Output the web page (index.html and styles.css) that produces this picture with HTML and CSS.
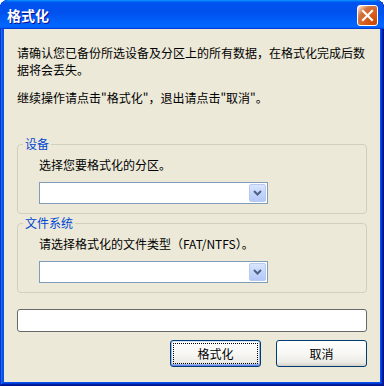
FILE: index.html
```html
<!DOCTYPE html>
<html lang="zh-CN">
<head>
<meta charset="utf-8">
<title>格式化</title>
<link rel="stylesheet" href="styles.css">
</head>
<body>
<div class="window">
  <div class="titlebar">
    <span class="title">格式化</span>
    <span class="close" aria-label="关闭">
      <svg width="13" height="13" viewBox="0 0 13 13"><path d="M2 2 L11 11 M11 2 L2 11" stroke="#fff" stroke-width="2.2" stroke-linecap="square"/></svg>
    </span>
  </div>
  <div class="client">
    <p class="msg">请确认您已备份所选设备及分区上的所有数据，在格式化完成后数据将会丢失。</p>
    <p class="msg msg2">继续操作请点击"格式化"，退出请点击"取消"。</p>
    <fieldset class="group">
      <legend>设备</legend>
      <div class="hint">选择您要格式化的分区。</div>
      <div class="combo">
        <span class="combo-arrow"><svg width="9" height="6" viewBox="0 0 9 6"><path d="M1 1 L4.5 4.5 L8 1" fill="none" stroke="#4d6185" stroke-width="2"/></svg></span>
      </div>
    </fieldset>
    <fieldset class="group">
      <legend>文件系统</legend>
      <div class="hint">请选择格式化的文件类型（FAT/NTFS）。</div>
      <div class="combo">
        <span class="combo-arrow"><svg width="9" height="6" viewBox="0 0 9 6"><path d="M1 1 L4.5 4.5 L8 1" fill="none" stroke="#4d6185" stroke-width="2"/></svg></span>
      </div>
    </fieldset>
    <div class="progress"></div>
    <div class="buttons">
      <button class="btn btn-default"><span class="focus">格式化</span></button>
      <button class="btn">取消</button>
    </div>
  </div>
</div>
</body>
</html>
```
FILE: styles.css
```css
html, body {
  margin: 0;
  padding: 0;
  background: #ffffff;
}
body {
  font-family: "Noto Sans CJK SC", "Liberation Sans", sans-serif;
  font-size: 12px;
  color: #000;
}
.window {
  width: 384px;
  height: 386px;
  display: flex;
  flex-direction: column;
  background: #0a50e6;
  border-radius: 8px 8px 0 0;
  box-shadow: inset -1px -1px #00138c, inset 1px 1px #0831d9, inset -2px -2px #001ea0, inset 2px 2px #166aee, inset -3px -3px #003bda, inset 3px 3px #0855dd;
  overflow: hidden;
}
.titlebar {
  height: 29px;
  flex: none;
  display: flex;
  align-items: center;
  justify-content: space-between;
  padding: 0 6px 0 7px;
  border-radius: 8px 8px 0 0;
  background: linear-gradient(180deg, #0997ff, #0053ee 8%, #0050ee 40%, #06f 88%, #06f 93%, #005bff 95%, #003dd7 96%, #003dd7);
}
.title {
  color: #fff;
  font-weight: bold;
  font-size: 14px;
  line-height: 16px;
  text-shadow: 1px 1px #0f1089;
  padding-top: 1px;
}
.close {
  width: 21px;
  height: 21px;
  box-sizing: border-box;
  border: 1px solid #fff;
  border-radius: 3px;
  display: flex;
  align-items: center;
  justify-content: center;
  background: radial-gradient(circle at 90% 90%, #cc4600 0, #dc6527 55%, #cd7546 70%, #ffccb2 90%, #fff 100%);
  margin-top: 2px;
}
.client {
  flex: 1;
  margin: 0 4px 4px;
  background: #ece9d8;
  padding: 15px 13px 0;
  display: flex;
  flex-direction: column;
}
.msg {
  margin: 0;
  width: 352px;
  line-height: 17px;
}
.msg2 {
  margin-top: 11px;
}
.group {
  margin: 31px 0 0;
  padding: 5px 21px 9px;
  border: 1px solid #d0d0bf;
  border-radius: 4px;
  min-width: 0;
}
.group + .group {
  margin-top: 2px;
}
.group legend {
  color: #0046d5;
  padding: 0 2px;
  margin-left: -16px;
  line-height: 14px;
}
.hint {
  line-height: 17px;
}
.combo {
  margin-top: 9px;
  width: 229px;
  height: 22px;
  box-sizing: border-box;
  border: 1px solid #7f9db9;
  background: #fff;
  display: flex;
  justify-content: flex-end;
  padding: 1px;
}
.combo-arrow {
  width: 17px;
  height: 18px;
  box-sizing: border-box;
  border: 1px solid #bac9f0;
  border-radius: 2px;
  background: linear-gradient(180deg, #dae6fe 0%, #c5d5fb 50%, #b4c8f8 100%);
  display: flex;
  align-items: center;
  justify-content: center;
}
.progress {
  margin-top: 16px;
  height: 23px;
  box-sizing: border-box;
  border: 1px solid #686868;
  border-radius: 3px;
  background: #fff;
}
.buttons {
  margin-top: 8px;
  display: flex;
  justify-content: flex-end;
  gap: 15px;
}
.btn {
  width: 91px;
  height: 27px;
  box-sizing: border-box;
  border: 1px solid #003c74;
  border-radius: 3px;
  background: linear-gradient(180deg, #fff 0%, #f7f7f4 50%, #ecebe6 85%, #d6d0c5 100%);
  font-family: "Noto Sans CJK SC", "Liberation Sans", sans-serif;
  font-size: 12px;
  color: #000;
  padding: 0;
  display: flex;
  align-items: center;
  justify-content: center;
}
.btn-default {
  box-shadow: inset 0 -1px #6982ee, inset 1px 0 #9db9eb, inset -1px 0 #9db9eb, inset 0 1px #cee7ff, inset 0 -2px #98b8ea;
  padding: 2px;
}
.focus {
  flex: 1;
  align-self: stretch;
  display: flex;
  align-items: center;
  justify-content: center;
  border: 1px dotted #000;
}
```
